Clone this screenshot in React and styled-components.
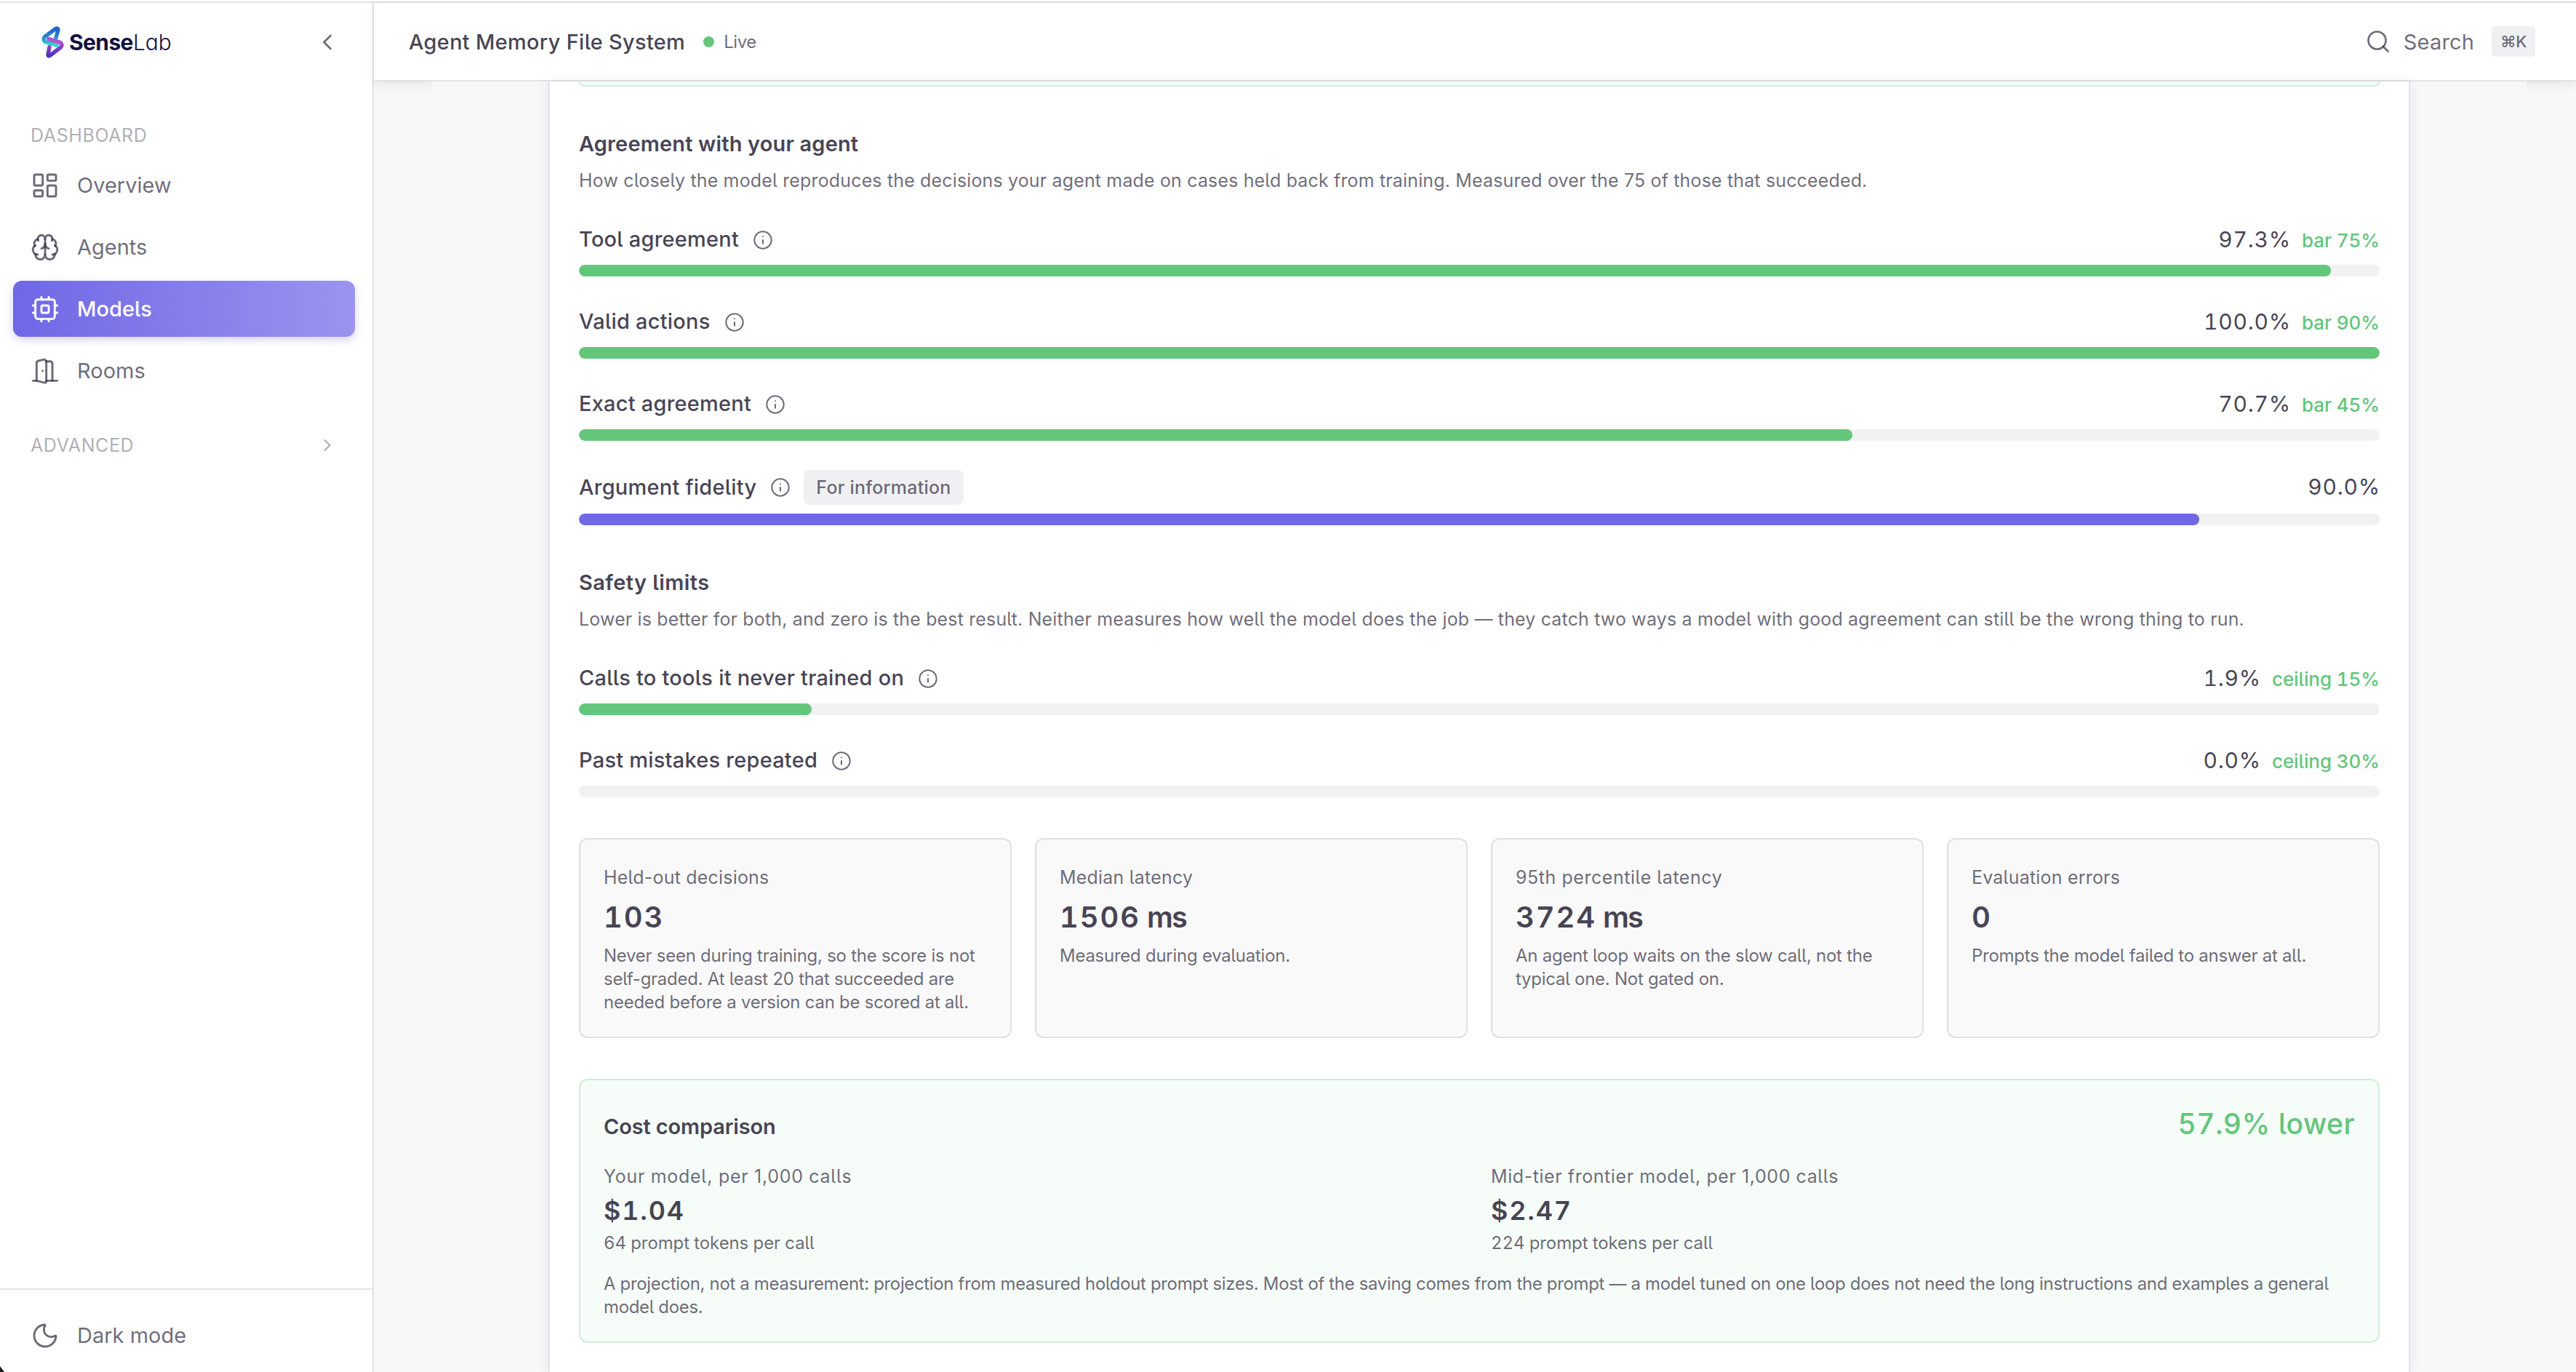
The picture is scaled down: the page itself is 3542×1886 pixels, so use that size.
import React from 'react'
import styled, { createGlobalStyle, css } from 'styled-components'
import { Brain, ChevronLeft, ChevronRight, Info, LayoutDashboard, Moon, Search } from 'lucide-react'

const colors = {
    text: 'rgba(47, 43, 61, 0.9)',
    muted: 'rgba(47, 43, 61, 0.7)',
    faint: 'rgba(47, 43, 61, 0.4)',
    primary: '#7168e6',
    success: '#63c67b',
    line: '#e3e3e5',
    page: '#f8f8fa',
}

const GlobalStyle = createGlobalStyle`
    * {
        box-sizing: border-box;
        margin: 0;
        padding: 0;
    }

    body {
        background: #fff;
        color: ${colors.text};
        font-family: Inter, "Open Sans", sans-serif;
        font-size: 29px;
        font-feature-settings: "cv05";
        overflow: hidden;
    }
`;

const Window = styled.div`
    position: relative;
    display: flex;
    height: 1886px;
    padding-top: 4px;
    overflow: hidden;
    background: linear-gradient(#fff 2px, #e2e2e2 2px, #e2e2e2 4px, #fff 4px);
`;

/* rounded corner of the window frame */
const WindowCorner = styled.div`
    position: absolute;
    left: 0;
    bottom: 0;
    width: 6px;
    height: 8px;
    background: #1c1c1c;
    clip-path: polygon(0 0, 100% 100%, 0 100%);
`;

/* ---------- sidebar ---------- */

const Sidebar = styled.aside`
    display: flex;
    flex-direction: column;
    width: 514px;
    flex: none;
    border-right: 2px solid ${colors.line};
    background: #fff;
`;

const SidebarHeader = styled.div`
    display: flex;
    align-items: center;
    justify-content: space-between;
    height: 108px;
    padding: 0 44px 0 52px;
    color: ${colors.muted};
`;

const Brand = styled.div`
    display: flex;
    align-items: center;
    color: #15113f;
    font-size: 30px;
    line-height: 44px;
    font-feature-settings: "cv11";
`;

const BrandBold = styled.span`
    margin-left: 2px;
    font-weight: 700;
    letter-spacing: -0.6px;
`;

const BrandLight = styled.span`
    font-weight: 300;
    letter-spacing: 0;
`;

const NavLabel = styled.div`
    display: flex;
    align-items: center;
    justify-content: space-between;
    height: 40px;
    padding: 0 48px 0 42px;
    margin-top: ${({ $top }) => $top}px;
    color: ${colors.faint};
    font-size: 25px;
    letter-spacing: 0.6px;
`;

const NavList = styled.nav`
    display: flex;
    flex-direction: column;
    gap: 8px;
    margin-top: 10px;
    padding: 0 24px 0 18px;
`;

const NavItem = styled.div`
    display: flex;
    align-items: center;
    gap: 24px;
    height: 77px;
    padding-left: 24px;
    border-radius: 12px;
    color: ${colors.muted};

    ${({ $active }) => $active && css`
        background: linear-gradient(90deg, #7067e6, #9b94ee);
        box-shadow: 0 4px 12px rgba(112, 103, 230, 0.3);
        color: #fff;
        font-weight: 460;
    `}
`;

const SidebarFooter = styled.div`
    display: flex;
    align-items: center;
    gap: 24px;
    height: 115px;
    margin-top: auto;
    padding: 12px 0 0 42px;
    border-top: 2px solid ${colors.line};
    color: ${colors.muted};
`;

/* ---------- top bar ---------- */

const Main = styled.main`
    display: flex;
    flex-direction: column;
    flex: 1;
    min-width: 0;
    background: ${colors.page};
`;

const TopBar = styled.header`
    display: flex;
    align-items: center;
    height: 108px;
    flex: none;
    padding: 0 56px 0 48px;
    border-bottom: 2px solid ${colors.line};
    background: #fff;
    box-shadow: 0 4px 12px rgba(47, 43, 61, 0.09);
`;

const PageTitle = styled.h1`
    font-size: 29px;
    font-weight: 460;
    letter-spacing: 0.27px;
`;

const LiveDot = styled.span`
    width: 15px;
    height: 15px;
    margin: 0 13px 0 25px;
    border-radius: 50%;
    background: ${colors.success};
`;

const LiveText = styled.span`
    color: ${colors.muted};
    font-size: 24px;
    letter-spacing: -0.4px;
`;

const SearchBox = styled.div`
    display: flex;
    align-items: center;
    gap: 17px;
    margin-left: auto;
    color: ${colors.muted};
    letter-spacing: 0.15px;
`;

const Shortcut = styled.kbd`
    display: grid;
    place-items: center;
    width: 60px;
    height: 42px;
    margin-left: 7px;
    border-radius: 5px;
    background: #f0f0f2;
    font-family: inherit;
    font-size: 22px;
    font-weight: 460;
    letter-spacing: -0.5px;
`;

/* ---------- page ---------- */

/* the column sits over the shadow of the top bar */
const Column = styled.div`
    position: relative;
    display: flex;
    justify-content: center;
    width: 2880px;
    height: 1774px;
    margin-left: 80px;
    background: ${colors.page};
`;

const Card = styled.section`
    width: 2560px;
    padding: 0 40px;
    border: solid #e4e4e8;
    border-width: 0 2px;
    background: #fff;
    box-shadow: 0 0 16px rgba(47, 43, 61, 0.09);
`;

const PreviousPanel = styled.div`
    height: 7px;
    border: 2px solid #d0edd7;
    border-top: none;
    border-radius: 0 0 12px 12px;
    background: #f6fcf8;
`;

const Section = styled.div`
    margin-top: 56px;
`;

const Heading = styled.h2`
    font-size: 29px;
    font-weight: 600;
    line-height: 45px;
    letter-spacing: ${({ $spacing = 0.15 }) => $spacing}px;
`;

const Description = styled.p`
    margin: 9px 0 -1px;
    color: ${colors.muted};
    font-size: 25px;
    line-height: 39px;
    letter-spacing: 0.15px;
    white-space: nowrap;
`;

const Metric = styled.div`
    margin-top: 40px;
`;

const MetricHead = styled.div`
    display: flex;
    align-items: center;
    min-height: 45px;
    margin-bottom: 12px;
    color: ${colors.muted};
`;

const MetricName = styled.span`
    margin: 0 19px 2px 0;
    color: ${colors.text};
    font-weight: 470;
    letter-spacing: 0.22px;
`;

const Chip = styled.span`
    height: 48px;
    margin-left: 18px;
    padding: 0 17px;
    border-radius: 8px;
    background: #f0f0f2;
    font-size: 25px;
    font-weight: 470;
    line-height: 48px;
    letter-spacing: 0.22px;
`;

const MetricFigures = styled.span`
    display: flex;
    align-items: baseline;
    gap: 15px;
    margin: 0 0 2px auto;
    font-variant-numeric: tabular-nums;
`;

const MetricValue = styled.span`
    color: ${colors.text};
    font-size: 30px;
    letter-spacing: 0.8px;

    &:last-child {
        margin-right: -1px;
    }
`;

const MetricLimit = styled.span`
    color: ${colors.success};
    font-size: 26px;
    font-weight: 500;
    letter-spacing: -0.1px;
`;

const Track = styled.div`
    height: 16px;
    border-radius: 8px;
    background: #f1f1f1;
    overflow: hidden;
`;

const Fill = styled.div`
    height: 100%;
    border-radius: 8px;
    background: ${({ $info }) => ($info ? colors.primary : colors.success)};
`;

const StatGrid = styled.div`
    display: grid;
    grid-template-columns: repeat(4, 1fr);
    gap: 32px;
    margin-top: 56px;
`;

const Stat = styled.div`
    height: 275px;
    padding: 33px 32px 0;
    border: 2px solid #e0e0e1;
    border-radius: 12px;
    background: #f9f9f9;
`;

const Label = styled.div`
    color: ${colors.muted};
    font-size: 25px;
    line-height: 39px;
    letter-spacing: ${({ $spacing }) => $spacing}px;
    white-space: nowrap;
`;

const StatValue = styled.div`
    margin: 3px 0 6px;
    font-size: 40px;
    font-weight: 570;
    line-height: 63px;
    letter-spacing: 1.9px;
    font-variant-numeric: tabular-nums;
`;

const Unit = styled.span`
    letter-spacing: -2px;
`;

const Caption = styled.p`
    color: ${colors.muted};
    font-size: 24px;
    line-height: 32px;
    letter-spacing: ${({ $spacing = -0.26 }) => $spacing}px;
`;

const CostPanel = styled.div`
    height: 363px;
    margin-top: 56px;
    padding: 32px 32px 0;
    border: 2px solid #d0edd7;
    border-radius: 12px;
    background: #f6fcf8;
`;

const CostHead = styled.div`
    display: flex;
    align-items: baseline;
    justify-content: space-between;
    height: 56px;
    margin-bottom: 25px;
    line-height: 56px;
`;

const Saving = styled.span`
    color: ${colors.success};
    font-size: 39px;
    font-weight: 550;
    letter-spacing: 0.45px;
    font-variant-numeric: tabular-nums;
`;

const CostGrid = styled.div`
    display: grid;
    grid-template-columns: 1fr 1fr;
    gap: 32px;
    margin-bottom: 22px;
`;

const Price = styled.div`
    margin-top: 1px;
    font-size: 36px;
    font-weight: 570;
    line-height: 53px;
    letter-spacing: 1.8px;
    font-variant-numeric: tabular-nums;
`;

const Tokens = styled(Caption)`
    line-height: 36px;
    font-variant-numeric: tabular-nums;
`;

const agreement = [
    { name: 'Tool agreement', value: '97.3%', limit: 'bar 75%', fill: 97.3 },
    { name: 'Valid actions', value: '100.0%', limit: 'bar 90%', fill: 100 },
    { name: 'Exact agreement', value: '70.7%', limit: 'bar 45%', fill: 70.7 },
    { name: 'Argument fidelity', value: '90.0%', fill: 90, info: true },
];

// safety bars are drawn relative to their ceiling
const safety = [
    { name: 'Calls to tools it never trained on', value: '1.9%', limit: 'ceiling 15%', fill: 12.94 },
    { name: 'Past mistakes repeated', value: '0.0%', limit: 'ceiling 30%', fill: 0 },
];

const stats = [
    {
        label: 'Held-out decisions',
        value: '103',
        note: 'Never seen during training, so the score is not self-graded. At least 20 that succeeded are needed before a version can be scored at all.',
    },
    { label: 'Median latency', value: '1506', unit: 'ms', note: 'Measured during evaluation.' },
    {
        label: '95th percentile latency',
        value: '3724',
        unit: 'ms',
        note: 'An agent loop waits on the slow call, not the typical one. Not gated on.',
        spacing: 0.55,
    },
    { label: 'Evaluation errors', value: '0', note: 'Prompts the model failed to answer at all.' },
];

const costs = [
    { label: 'Your model, per 1,000 calls', price: '$1.04', tokens: '64 prompt tokens per call', spacing: 0.7 },
    { label: 'Mid-tier frontier model, per 1,000 calls', price: '$2.47', tokens: '224 prompt tokens per call', spacing: 0.57 },
];

const Logo = () => (
    <svg width="41" height="52" viewBox="52 32 41 52" fill="none" strokeWidth="5.4" strokeLinecap="round" strokeLinejoin="round">
        <defs>
            <linearGradient id="logoTop" x1="0" y1="0" x2="0" y2="1">
                <stop offset="0" stopColor="#1f63cf" />
                <stop offset="0.5" stopColor="#2387cf" />
                <stop offset="1" stopColor="#3bd6d0" />
            </linearGradient>
            <linearGradient id="logoBottom" x1="0" y1="0" x2="0" y2="1">
                <stop offset="0" stopColor="#b455cf" />
                <stop offset="0.35" stopColor="#9a48cc" />
                <stop offset="1" stopColor="#4630bd" />
            </linearGradient>
        </defs>
        <path d="M68 64.5 L66 75 Q66 78 69 76 L83.5 65 Q87 61 83 58.5 L67 53.5" stroke="url(#logoBottom)" />
        <path d="M77 52 L80 41 Q80 38 76.5 39.5 L61.5 50.5 Q58.5 54 62 57.5 L78.5 62.5" stroke="url(#logoTop)" />
        <path d="M67 53.5 L82 58.2" stroke="#b254cf" />
    </svg>
)

const LineIcon = ({ children }) => (
    <svg width="40" height="40" viewBox="0 0 24 24" fill="none" stroke="currentColor" strokeWidth="1.75" strokeLinecap="round" strokeLinejoin="round">
        {children}
    </svg>
)

const ChipIcon = () => (
    <LineIcon>
        <rect x="4" y="4" width="16" height="16" rx="2" />
        <rect x="9" y="9" width="6" height="6" rx="1" />
        <path d="M15 2v2" />
        <path d="M15 20v2" />
        <path d="M2 15h2" />
        <path d="M2 9h2" />
        <path d="M20 15h2" />
        <path d="M20 9h2" />
        <path d="M9 2v2" />
        <path d="M9 20v2" />
    </LineIcon>
)

const DoorIcon = () => (
    <LineIcon>
        <path d="M13 4h3a2 2 0 0 1 2 2v14" />
        <path d="M2 20h3" />
        <path d="M13 20h9" />
        <path d="M10 12v.01" />
        <path d="M13 4.562v16.157a1 1 0 0 1-1.242.97L5 20V5.562a2 2 0 0 1 1.515-1.94l4-1A2 2 0 0 1 13 4.561Z" />
    </LineIcon>
)

const MetricRow = ({ name, value, limit, fill, info }) => (
    <Metric>
        <MetricHead>
            <MetricName>{name}</MetricName>
            <Info size={28} strokeWidth={1.75} />
            {info && <Chip>For information</Chip>}
            <MetricFigures>
                <MetricValue>{value}</MetricValue>
                {limit && <MetricLimit>{limit}</MetricLimit>}
            </MetricFigures>
        </MetricHead>
        <Track>
            <Fill $info={info} style={{ width: `${fill}%` }} />
        </Track>
    </Metric>
)

const App = () => {
    return (
        <Window>
            <GlobalStyle />
            <Sidebar>
                <SidebarHeader>
                    <Brand>
                        <Logo />
                        <BrandBold>Sense</BrandBold>
                        <BrandLight>Lab</BrandLight>
                    </Brand>
                    <ChevronLeft size={36} strokeWidth={1.75} />
                </SidebarHeader>

                <NavLabel $top={54}>DASHBOARD</NavLabel>
                <NavList>
                    <NavItem><LayoutDashboard size={40} strokeWidth={1.75} />Overview</NavItem>
                    <NavItem><Brain size={40} strokeWidth={1.75} />Agents</NavItem>
                    <NavItem $active><ChipIcon />Models</NavItem>
                    <NavItem><DoorIcon />Rooms</NavItem>
                </NavList>
                <NavLabel $top={44}>
                    ADVANCED
                    <ChevronRight size={28} strokeWidth={1.75} />
                </NavLabel>

                <SidebarFooter>
                    <Moon size={40} strokeWidth={1.75} />
                    Dark mode
                </SidebarFooter>
            </Sidebar>

            <Main>
                <TopBar>
                    <PageTitle>Agent Memory File System</PageTitle>
                    <LiveDot />
                    <LiveText>Live</LiveText>
                    <SearchBox>
                        <Search size={36} strokeWidth={1.75} />
                        Search
                        <Shortcut>⌘K</Shortcut>
                    </SearchBox>
                </TopBar>

                <Column>
                    <Card>
                        <PreviousPanel />

                        <Section>
                            <Heading>Agreement with your agent</Heading>
                            <Description>
                                How closely the model reproduces the decisions your agent made on cases held back from training. Measured over the 75 of those that succeeded.
                            </Description>
                            {agreement.map((row) => <MetricRow key={row.name} {...row} />)}
                        </Section>

                        <Section>
                            <Heading $spacing={0.4}>Safety limits</Heading>
                            <Description>
                                Lower is better for both, and zero is the best result. Neither measures how well the model does the job — they catch two ways a model with good agreement can still be the wrong thing to run.
                            </Description>
                            {safety.map((row) => <MetricRow key={row.name} {...row} />)}
                        </Section>

                        <StatGrid>
                            {stats.map((stat) => (
                                <Stat key={stat.label}>
                                    <Label $spacing={stat.spacing || 0.2}>{stat.label}</Label>
                                    <StatValue>
                                        {stat.value}
                                        {stat.unit && <Unit> {stat.unit}</Unit>}
                                    </StatValue>
                                    <Caption>{stat.note}</Caption>
                                </Stat>
                            ))}
                        </StatGrid>

                        <CostPanel>
                            <CostHead>
                                <Heading $spacing={-0.15}>Cost comparison</Heading>
                                <Saving>57.9% lower</Saving>
                            </CostHead>
                            <CostGrid>
                                {costs.map((cost) => (
                                    <div key={cost.label}>
                                        <Label $spacing={cost.spacing}>{cost.label}</Label>
                                        <Price>{cost.price}</Price>
                                        <Tokens $spacing={-0.1}>{cost.tokens}</Tokens>
                                    </div>
                                ))}
                            </CostGrid>
                            <Caption $spacing={-0.35}>
                                A projection, not a measurement: projection from measured holdout prompt sizes. Most of the saving comes from the prompt — a model tuned on one loop does not need the long instructions and examples a general model does.
                            </Caption>
                        </CostPanel>
                    </Card>
                </Column>
            </Main>
            <WindowCorner />
        </Window>
    )
}

export default App
